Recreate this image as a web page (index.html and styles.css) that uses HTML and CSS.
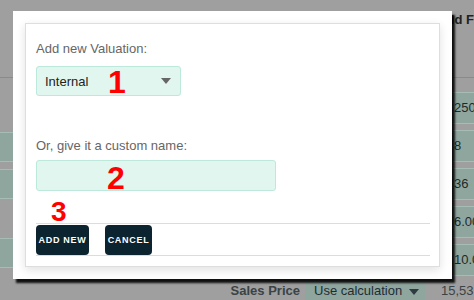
FILE: index.html
```html
<!DOCTYPE html>
<html lang="en">
<head>
  <meta charset="UTF-8" />
  <title>Add Valuation</title>
  <link rel="stylesheet" href="styles.css">
</head>
<body>

<!-- page behind the overlay -->
<div class="page">
  <div class="page-head">
    <span class="head-left">Bid Yield</span>
    <span class="head-pct">0.0 %</span>
    <span class="head-pct">0.0 %</span>
    <span class="head-right">Yield F</span>
  </div>

  <div class="page-rows">
    <div class="col-left">
      <div class="cell gap-a"></div>
      <div class="cell teal"></div>
      <div class="cell teal"></div>
      <div class="cell gap-b"></div>
      <div class="cell teal"></div>
    </div>
    <div class="col-mid"></div>
    <div class="col-right">
      <div class="cell teal">250</div>
      <div class="cell teal">8</div>
      <div class="cell teal">36</div>
      <div class="cell teal">6.00</div>
      <div class="cell teal">10.0</div>
    </div>
  </div>

  <div class="page-foot">
    <span class="foot-label">Sales Price</span>
    <span class="foot-select">Use calculation <i class="tri dark"></i></span>
    <span class="foot-value">15,53</span>
  </div>
</div>

<!-- modal -->
<div class="modal">
  <div class="panel">
    <p class="label first">Add new Valuation:</p>
    <div class="select">
      <span>Internal</span>
      <i class="tri"></i>
    </div>

    <p class="label second">Or, give it a custom name:</p>
    <input type="text" class="name-input">

    <div class="actions">
      <button>Add new</button>
      <button>Cancel</button>
    </div>
  </div>

  <!-- step markers -->
  <span class="step step-1">1</span>
  <span class="step step-2">2</span>
  <span class="step step-3">3</span>
</div>

</body>
</html>
```

FILE: styles.css
```css
body {
  margin: 0;
  width: 474px;
  height: 300px;
  overflow: hidden;
  position: relative;
  background: #9f9f9f;
  font-family: "Liberation Sans", Arial, sans-serif;
}

/* background page */
.page {
  display: flex;
  flex-direction: column;
  height: 300px;
}

.page-head {
  height: 78px;
  border-bottom: 1px solid #8a8a8a;
  display: flex;
  align-items: flex-start;
  padding-top: 8px;
  box-sizing: border-box;
  font-size: 13px;
  font-weight: bold;
  color: #555;
}

.head-left {
  margin-left: 28px;
  width: 317px;
}

.head-pct {
  width: 50px;
  color: #6a6a6a;
  margin-top: 4px;
}

.head-right {
  margin-top: 4px;
  margin-left: 4px;
  color: #222;
  white-space: nowrap;
}

.page-rows {
  flex: 1;
  display: flex;
}

.col-left {
  width: 13px;
  display: flex;
  flex-direction: column;
}

.col-mid {
  flex: 1;
}

.col-right {
  width: 36px;
  padding-top: 14px;
  display: flex;
  flex-direction: column;
  gap: 6px;
}

.cell {
  height: 30px;
  font-size: 13px;
  color: #1d2a2a;
  line-height: 30px;
  box-sizing: border-box;
}

.teal {
  background: #8fa69e;
  border-top: 1px solid #a6bdb5;
  border-bottom: 1px solid #a6bdb5;
}

.col-left .gap-a { height: 54px; }
.col-left .teal { height: 30px; margin-bottom: 7px; }
.col-left .gap-b { height: 32px; }

.col-right .cell {
  height: 32px;
  line-height: 30px;
  padding-left: 16px;
  white-space: nowrap;
}

.page-foot {
  height: 19px;
  display: flex;
  align-items: center;
  font-size: 13px;
}

.foot-label {
  width: 300px;
  text-align: right;
  font-weight: bold;
  color: #3a4346;
}

.foot-select {
  margin-left: 5px;
  width: 120px;
  height: 19px;
  line-height: 19px;
  background: #8fa69e;
  color: #1f2d33;
  padding-left: 9px;
  box-sizing: border-box;
}

.foot-value {
  margin-left: 16px;
  color: #3a4346;
}

.tri {
  display: inline-block;
  width: 0;
  height: 0;
  border-left: 5px solid transparent;
  border-right: 5px solid transparent;
  border-top: 6px solid #666;
  vertical-align: middle;
}

.tri.dark {
  border-top-color: #2e3c42;
  margin-left: 3px;
}

/* modal */
.modal {
  position: absolute;
  left: 13px;
  top: 11px;
  width: 439px;
  height: 268px;
  padding: 12px;
  box-sizing: border-box;
  background: #fff;
  box-shadow: 3px 4px 2px rgba(0, 0, 0, 0.9);
}

.panel {
  height: 100%;
  box-sizing: border-box;
  border: 1px solid #dedede;
  box-shadow: 0 3px 9px rgba(0, 0, 0, 0.12);
  padding: 0 9px 0 10px;
}

.label {
  margin: 0;
  font-size: 13px;
  line-height: 15px;
  color: #666;
}

.label.first {
  padding-top: 17px;
}

.label.second {
  margin-top: 42px;
}

.select {
  margin-top: 10px;
  width: 145px;
  height: 30px;
  box-sizing: border-box;
  background: #e2f6f0;
  border: 1px solid #bde9dc;
  border-radius: 3px;
  display: flex;
  align-items: center;
  justify-content: space-between;
  padding: 0 9px 0 8px;
  font-size: 13px;
  color: #222;
}

.name-input {
  display: block;
  margin-top: 7px;
  width: 240px;
  height: 31px;
  box-sizing: border-box;
  background: #e2f6f0;
  border: 1px solid #bde9dc;
  border-radius: 3px;
  outline: none;
}

.actions {
  margin-top: 32px;
  border-top: 1px solid #dcdcdc;
  border-bottom: 1px solid #dcdcdc;
  padding: 1px 0 0;
  display: flex;
  gap: 16px;
}

button {
  height: 30px;
  padding: 0;
  background: #0c2330;
  color: #fff;
  border: none;
  border-radius: 4px;
  font-family: "Liberation Sans", Arial, sans-serif;
  font-size: 9px;
  font-weight: bold;
  letter-spacing: 0.7px;
  text-transform: uppercase;
  white-space: nowrap;
}

.actions button:first-child { width: 53px; }
.actions button:last-child { width: 47px; }

/* red step markers */
.step {
  position: absolute;
  color: #f00;
  font-size: 32px;
  font-weight: bold;
  line-height: 1;
}

.step-1 { left: 95px; top: 55px; }
.step-2 { left: 94px; top: 151px; }
.step-3 { left: 38px; top: 187px; font-size: 28px; }
```
